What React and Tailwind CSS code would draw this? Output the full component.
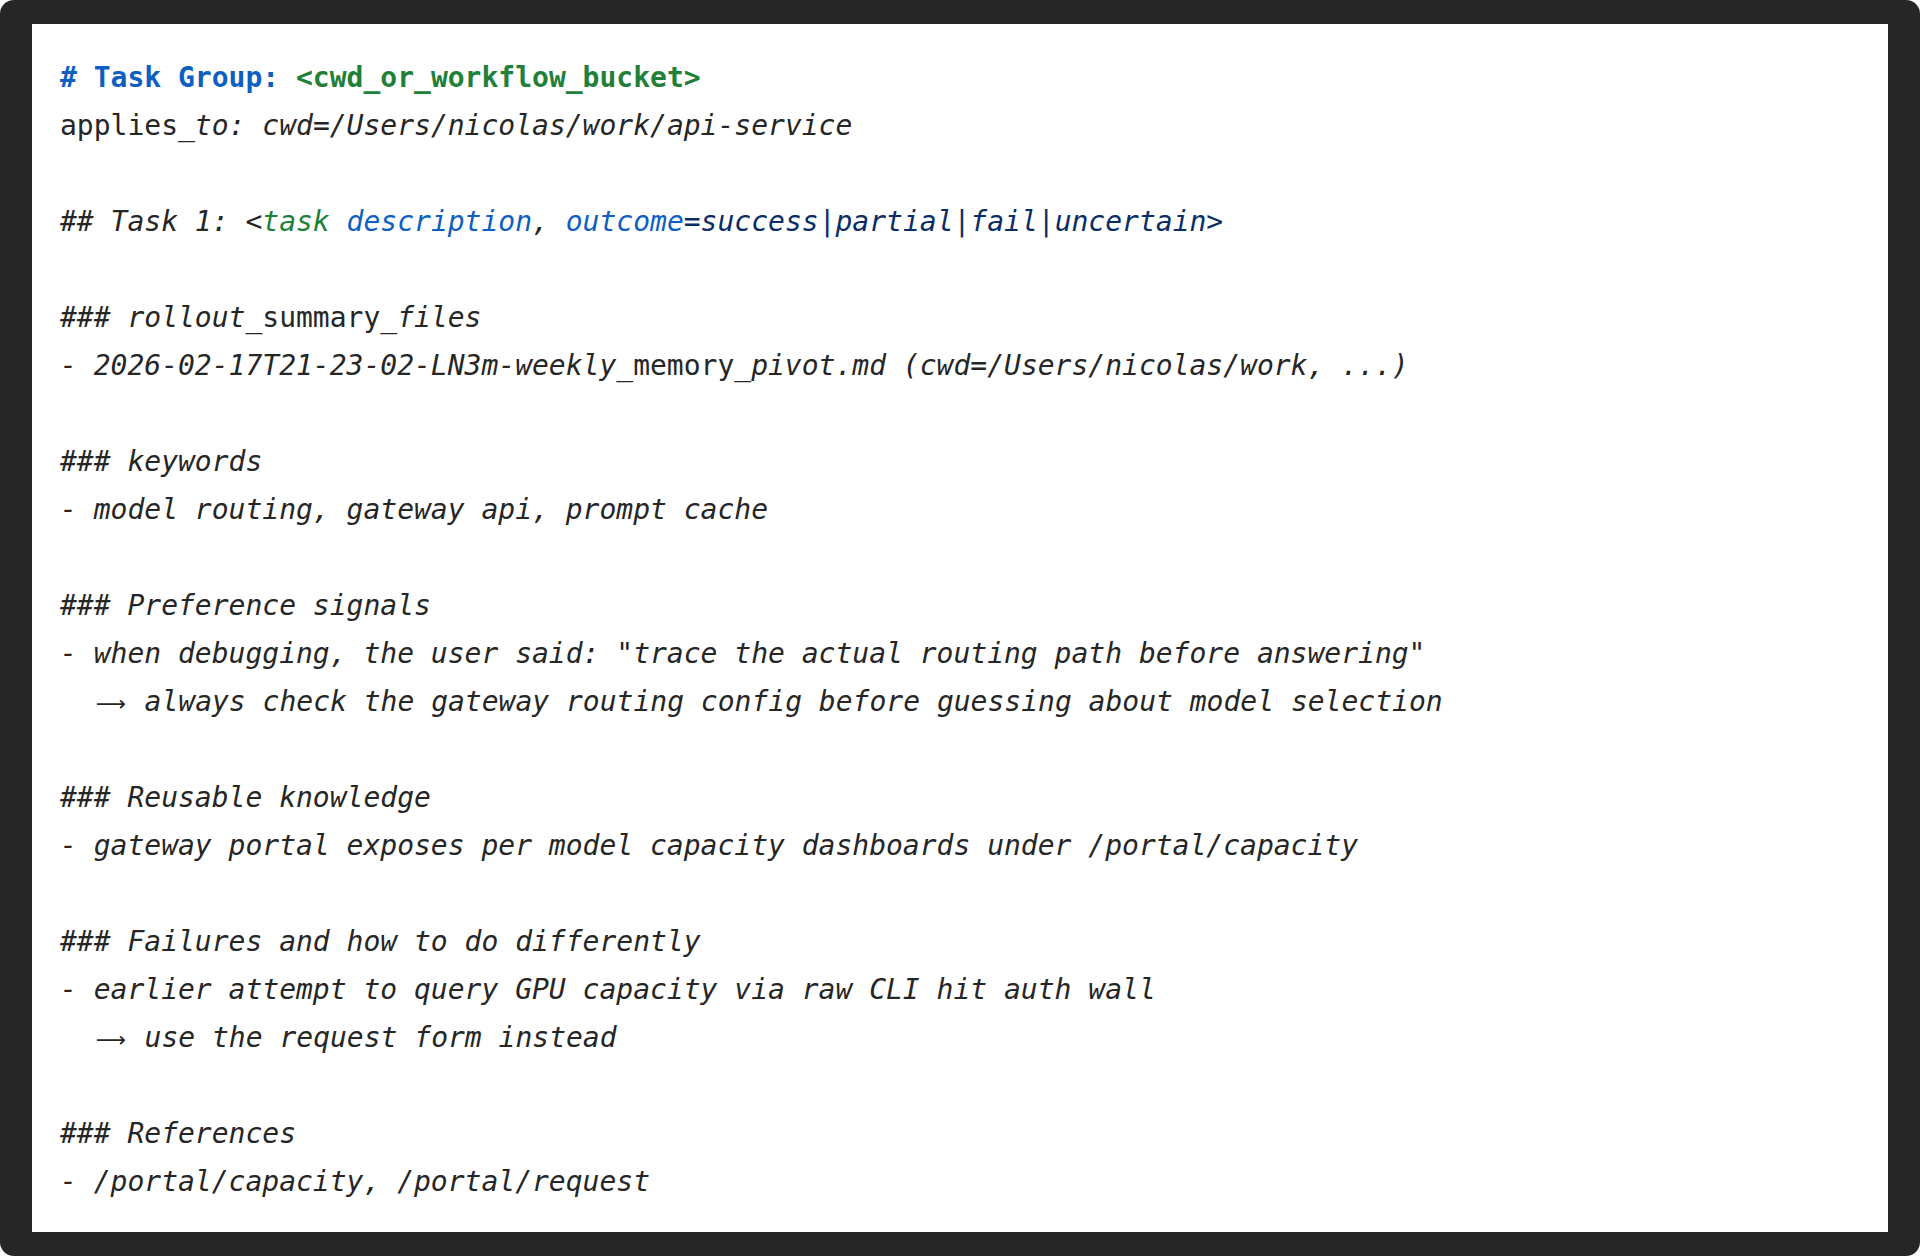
import React from "react";

const I = ({ children, className = "" }) => <span className={`italic ${className}`}>{children}</span>;
const U = ({ children, className = "" }) => <span className={`not-italic ${className}`}>{children}</span>;

const Line = ({ children }) => <div className="h-[48px]">{children}</div>;
const Blank = () => <div className="h-[48px]" />;

// long arrow takes two cells in the reference
const Arrow = () => (
    <span className="inline-block w-[34px] text-center not-italic font-['DejaVu_Sans',sans-serif] text-[21px]">⟶</span>
);

export default function App() {
    return (
        <div className="w-[1920px] h-[1256px] bg-white">
            <div className="h-full rounded-[14px] bg-[#262626] px-8 py-6">
                <div className="h-full bg-white px-7 pt-[30px] pb-[26px] font-['DejaVu_Sans_Mono','Liberation_Mono',monospace] text-[28px] leading-[48px] text-[#262626] whitespace-pre">
                    <Line>
                        <span className="font-bold text-[#0d5fc2]"># Task Group: </span>
                        <span className="font-bold text-[#1f8038]">&lt;cwd_or_workflow_bucket&gt;</span>
                    </Line>
                    <Line>
                        <U>applies</U>
                        <I>_to: cwd=/Users/nicolas/work/api-service</I>
                    </Line>
                    <Blank />
                    <Line>
                        <I>
                            ## Task 1: &lt;
                            <span className="text-[#1f8038]">task</span>{" "}
                            <span className="text-[#0d5fc2]">description</span>,{" "}
                            <span className="text-[#0d5fc2]">outcome</span>
                            <span className="text-[#0b2d66]">=success|partial|fail|uncertain&gt;</span>
                        </I>
                    </Line>
                    <Blank />
                    <Line>
                        <I>### rollout</I>
                        <U>_summary_</U>
                        <I>files</I>
                    </Line>
                    <Line>
                        <I>- 2026-02-17T21-23-02-LN3m-weekly</I>
                        <U>_memory_</U>
                        <I>pivot.md (cwd=/Users/nicolas/work, ...)</I>
                    </Line>
                    <Blank />
                    <Line><I>### keywords</I></Line>
                    <Line><I>- model routing, gateway api, prompt cache</I></Line>
                    <Blank />
                    <Line><I>### Preference signals</I></Line>
                    <Line><I>- when debugging, the user said: "trace the actual routing path before answering"</I></Line>
                    <Line>
                        <I>  </I>
                        <Arrow />
                        <I> always check the gateway routing config before guessing about model selection</I>
                    </Line>
                    <Blank />
                    <Line><I>### Reusable knowledge</I></Line>
                    <Line><I>- gateway portal exposes per model capacity dashboards under /portal/capacity</I></Line>
                    <Blank />
                    <Line><I>### Failures and how to do differently</I></Line>
                    <Line><I>- earlier attempt to query GPU capacity via raw CLI hit auth wall</I></Line>
                    <Line>
                        <I>  </I>
                        <Arrow />
                        <I> use the request form instead</I>
                    </Line>
                    <Blank />
                    <Line><I>### References</I></Line>
                    <Line><I>- /portal/capacity, /portal/request</I></Line>
                </div>
            </div>
        </div>
    );
}
